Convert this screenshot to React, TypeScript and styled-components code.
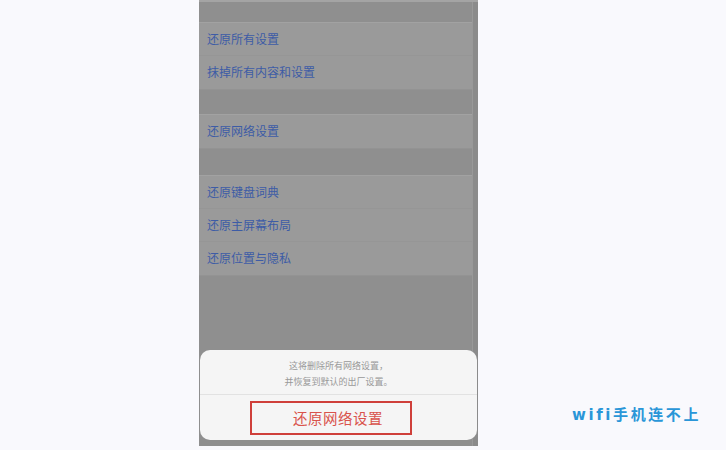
import styled, { createGlobalStyle } from "styled-components"

const GlobalStyle = createGlobalStyle`
    html, body {
        margin: 0;
        padding: 0;
        background: #f9f9fd;
    }
    body {
        font-family: "Noto Sans CJK SC", "Noto Sans", sans-serif;
    }
`

const Page = styled.div`
    width: 726px;
    height: 450px;
    display: flex;
    overflow: hidden;
`

const Phone = styled.div`
    position: relative;
    margin-left: 199px;
    width: 279px;
    height: 446px;
    display: flex;
    background: #8f8f8f;
    border-top: 2px solid #a4a4a4;
    box-sizing: border-box;
`

const List = styled.div`
    flex: 1;
    display: flex;
    flex-direction: column;
`

const Gap = styled.div<{ $h: number }>`
    height: ${(p) => p.$h}px;
    background: #8f8f8f;
`

const Group = styled.div`
    display: flex;
    flex-direction: column;
    background: #9a9a9a;
    border-top: 1px solid #a2a2a2;
    border-bottom: 1px solid #939393;
`

const Cell = styled.div<{ $h: number }>`
    height: ${(p) => p.$h}px;
    display: flex;
    align-items: center;
    padding-left: 8px;
    padding-bottom: 2px;
    font-size: 12px;
    color: #3d5ca6;
    border-bottom: 1px solid #969696;
    box-sizing: border-box;
    &:last-child {
        border-bottom: none;
    }
`

const ScrollStrip = styled.div`
    width: 6px;
    background: #8b8b8b;
    border-left: 1px solid #999;
    box-sizing: border-box;
`

const Sheet = styled.div`
    position: absolute;
    left: 1px;
    right: 1px;
    top: 348px;
    height: 90px;
    background: #f5f5f5;
    border-radius: 10px;
    display: flex;
    flex-direction: column;
`

const Message = styled.div`
    padding-top: 8px;
    height: 36px;
    text-align: center;
    font-size: 9px;
    line-height: 16px;
    color: #999;
    border-bottom: 1px solid #e2e2e2;
`

const ButtonRow = styled.div`
    flex: 1;
    display: flex;
    align-items: center;
`

const Highlight = styled.div`
    margin-left: 50px;
    width: 162px;
    height: 34px;
    box-sizing: border-box;
    border: 2px solid #cf3f3a;
    display: flex;
    align-items: center;
    justify-content: center;
    padding-left: 14px;
    font-size: 14.5px;
    color: #d9534c;
    letter-spacing: 0.5px;
`

const Side = styled.div`
    flex: 1;
    display: flex;
    align-items: flex-end;
    padding-left: 94px;
    padding-bottom: 26px;
`

const Watermark = styled.div`
    font-family: "DejaVu Sans", "Noto Sans CJK SC", sans-serif;
    font-weight: bold;
    font-size: 15px;
    letter-spacing: 2.6px;
    color: #2a96d8;
`

export default function App() {
    return (
        <Page>
            <GlobalStyle />
            <Phone>
                <List>
                    <Gap $h={20} />
                    <Group>
                        <Cell $h={33}>还原所有设置</Cell>
                        <Cell $h={33}>抹掉所有内容和设置</Cell>
                    </Group>
                    <Gap $h={24} />
                    <Group>
                        <Cell $h={33}>还原网络设置</Cell>
                    </Group>
                    <Gap $h={26} />
                    <Group>
                        <Cell $h={33}>还原键盘词典</Cell>
                        <Cell $h={33}>还原主屏幕布局</Cell>
                        <Cell $h={33}>还原位置与隐私</Cell>
                    </Group>
                </List>
                <ScrollStrip />
                <Sheet>
                    <Message>
                        这将删除所有网络设置，
                        <br />
                        并恢复到默认的出厂设置。
                    </Message>
                    <ButtonRow>
                        <Highlight>还原网络设置</Highlight>
                    </ButtonRow>
                </Sheet>
            </Phone>
            <Side>
                <Watermark>wifi手机连不上</Watermark>
            </Side>
        </Page>
    )
}
